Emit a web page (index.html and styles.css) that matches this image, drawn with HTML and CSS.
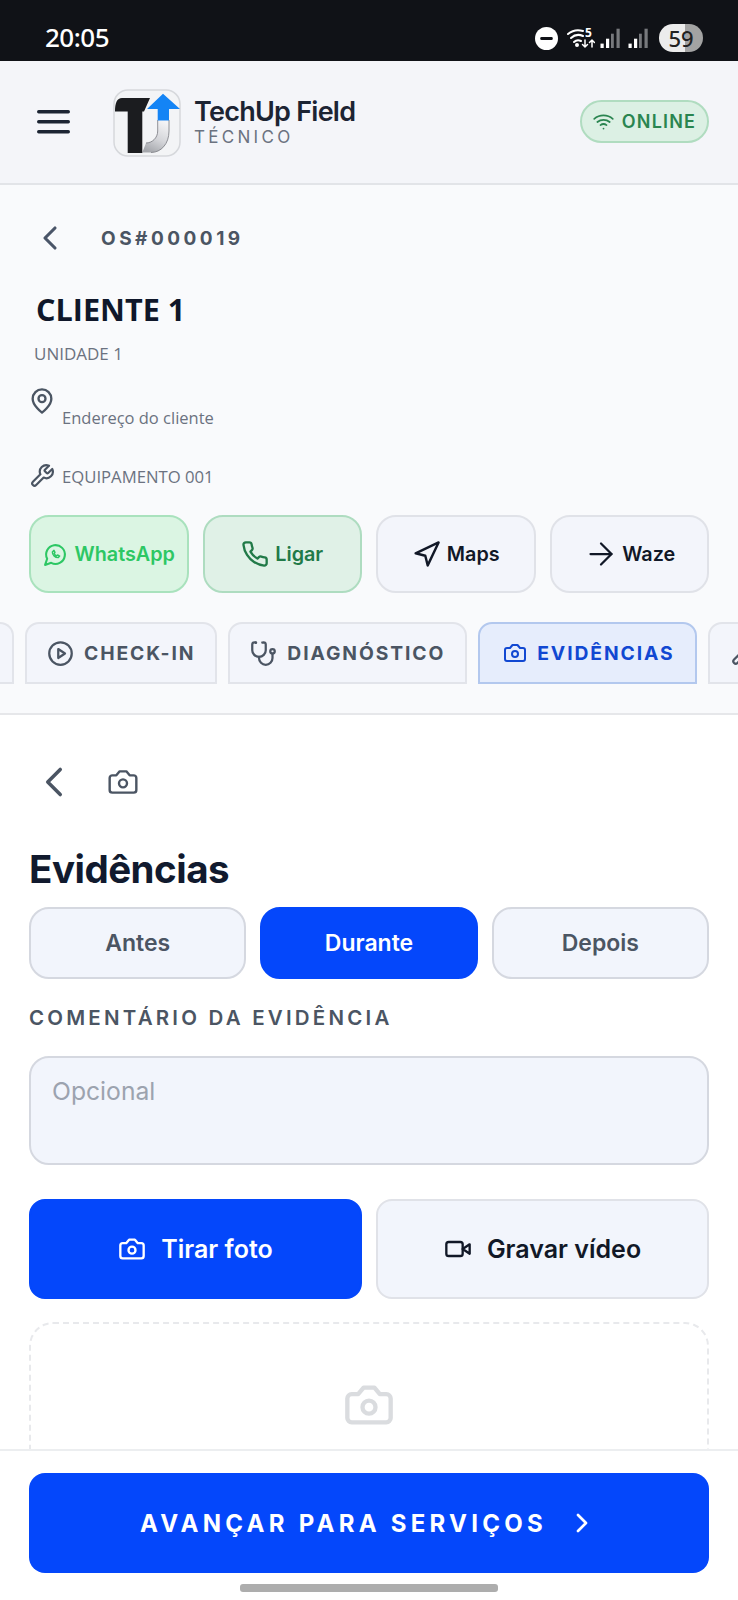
FILE: index.html
```html
<!DOCTYPE html>
<html lang="pt-BR">
<head>
    <meta charset="UTF-8">
    <meta name="viewport" content="width=device-width, initial-scale=1.0">
    <title>TechUp Field</title>
    <link rel="stylesheet" href="styles.css">
</head>
<body>
    <svg class="defs" width="0" height="0">
        <symbol id="i-camera" viewBox="0 0 24 24"><path d="M14.5 4h-5L7 7H4a2 2 0 0 0-2 2v9a2 2 0 0 0 2 2h16a2 2 0 0 0 2-2V9a2 2 0 0 0-2-2h-3l-2.5-3z"/><circle cx="12" cy="13" r="3"/></symbol>
        <symbol id="i-back" viewBox="0 0 24 24"><path d="m15 18-6-6 6-6"/></symbol>
        <symbol id="i-wrench" viewBox="0 0 24 24"><path d="M14.700 6.300a1 1 0 0 0 0 1.400l1.600 1.600a1 1 0 0 0 1.400 0l3.770-3.770a6 6 0 0 1-7.940 7.940l-6.910 6.910a2.120 2.120 0 0 1-3-3l6.910-6.910a6 6 0 0 1 7.940-7.940l-3.760 3.760z"/></symbol>
        <symbol id="i-signal" viewBox="0 0 20 20"><rect x="0.500" y="15.600" width="3.200" height="4.400" fill="#fff"/><rect x="6" y="10.700" width="3.200" height="9.300" fill="#fff"/><rect x="11" y="5.700" width="2.800" height="14.300" fill="#77797d"/><rect x="16.500" y="0.700" width="3.200" height="19.300" fill="#77797d"/></symbol>
    </svg>

    <div class="statusbar">
        <span class="clock">20:05</span>
        <div class="status-icons">
            <svg class="st-dnd" viewBox="0 0 22 22"><circle cx="11" cy="11" r="11" fill="#fff"/><rect x="5" y="9.500" width="12" height="3" rx="1.200" fill="#101217"/></svg>
            <svg class="st-wifi" viewBox="0 0 28 22" fill="none" stroke="#fff" stroke-width="2" stroke-linecap="round">
                <path d="M1 7a16 16 0 0 1 15-3"/>
                <path d="M4 11a11 11 0 0 1 12-2"/>
                <path d="M7 15a6 6 0 0 1 7-1"/>
                <circle cx="10" cy="18" r="1" fill="#fff"/>
                <path d="M18 13v7m-2.500-2.500 2.500 2.500 2.500-2.500" stroke-width="1.500"/>
                <path d="M25 20v-7m-2.500 2.500 2.500-2.500 2.500 2.500" stroke-width="1.500"/>
            </svg>
            <span class="st-five">5</span>
            <svg class="st-signal"><use href="#i-signal"/></svg>
            <svg class="st-signal"><use href="#i-signal"/></svg>
            <span class="battery">59</span>
        </div>
    </div>

    <header class="topbar">
        <svg class="menu-icon" viewBox="0 0 33 24"><rect y="0" width="33" height="3.500" rx="1.700"/><rect y="10" width="33" height="3.500" rx="1.700"/><rect y="20" width="33" height="3.500" rx="1.700"/></svg>
        <svg class="logo" viewBox="0 0 68 68">
            <defs>
                <linearGradient id="logo-grey" x1="0.700" y1="0" x2="0.300" y2="1"><stop offset="0" stop-color="#f4f4f6"/><stop offset="0.550" stop-color="#d4d5d9"/><stop offset="1" stop-color="#a4a6ab"/></linearGradient>
            </defs>
            <rect x="1" y="1" width="66" height="66" rx="14" fill="#f3f4f6" stroke="#d6d8dc" stroke-width="1.500"/>
            <path d="M44.700 31H56v11c0 13-8 21.500-18 21.500h-8.700L33 54c6 0 11.700-5 11.700-12z" fill="url(#logo-grey)"/>
            <path d="M56 31v11c0 13-8 21.500-18 21.500M44.700 31v11c0 7-5.700 12-11.700 12" fill="none" stroke="#77797f" stroke-width="0.800"/>
            <path d="M9 9h28l-6 13.500h-1.700V64H14.700V22.500H2C2 14 4 9 9 9z" fill="#1b1c1f"/>
            <path d="M50 4.700 67 20H56v11.400H44.700V20H34z" fill="#1484f5"/>
        </svg>
        <div class="brand">
            <div class="brand-name">TechUp Field</div>
            <div class="brand-role">TÉCNICO</div>
        </div>
        <div class="online">
            <svg class="icon" viewBox="0 0 24 24"><path d="M5 12.550a11 11 0 0 1 14.080 0"/><path d="M1.420 9a16 16 0 0 1 21.160 0"/><path d="M8.530 16.110a6 6 0 0 1 6.950 0"/><path d="M12 20h.010"/></svg>
            ONLINE
        </div>
    </header>

    <section class="order">
        <div class="order-top">
            <svg class="icon back-small"><use href="#i-back"/></svg>
            <span class="order-id">OS#000019</span>
        </div>
        <h1 class="client">CLIENTE 1</h1>
        <div class="unit">UNIDADE 1</div>
        <div class="address">
            <svg class="icon" viewBox="0 0 24 24"><path d="M20 10c0 6-8 12-8 12s-8-6-8-12a8 8 0 0 1 16 0Z"/><circle cx="12" cy="10" r="3"/></svg>
            <span>Endereço do cliente</span>
        </div>
        <div class="equipment">
            <svg class="icon"><use href="#i-wrench"/></svg>
            <span>EQUIPAMENTO 001</span>
        </div>
        <div class="contacts">
            <button class="contact contact-whats">
                <svg class="icon" viewBox="0 0 24 24"><path d="M7.900 20A9 9 0 1 0 4 16.100L2 22Z"/><path d="M9 9.500c0 3 2.500 5.500 5.500 5.500l1.500-1.500-2-1-1 .7c-1-.4-1.800-1.200-2.200-2.200l.7-1-1-2z" stroke-width="1.400"/></svg>
                WhatsApp
            </button>
            <button class="contact contact-call">
                <svg class="icon" viewBox="0 0 24 24"><path d="M22 16.920v3a2 2 0 0 1-2.180 2 19.790 19.790 0 0 1-8.630-3.070 19.500 19.500 0 0 1-6-6 19.790 19.790 0 0 1-3.070-8.670A2 2 0 0 1 4.110 2h3a2 2 0 0 1 2 1.720 12.840 12.840 0 0 0 .7 2.810 2 2 0 0 1-.45 2.110L8.090 9.910a16 16 0 0 0 6 6l1.270-1.270a2 2 0 0 1 2.110-.45 12.840 12.840 0 0 0 2.810.7A2 2 0 0 1 22 16.920z"/></svg>
                Ligar
            </button>
            <button class="contact contact-maps">
                <svg class="icon" viewBox="0 0 24 24"><polygon points="3 11 22 2 13 21 11 13 3 11"/></svg>
                Maps
            </button>
            <button class="contact contact-waze">
                <svg class="icon" viewBox="0 0 24 24"><path d="M5 12h14"/><path d="m12 5 7 7-7 7"/></svg>
                Waze
            </button>
        </div>
        <nav class="tabs">
            <div class="tab tab-cut"></div>
            <div class="tab">
                <svg class="icon" viewBox="0 0 24 24"><circle cx="12" cy="12" r="10"/><polygon points="10 8 16 12 10 16 10 8"/></svg>
                CHECK-IN
            </div>
            <div class="tab">
                <svg class="icon" viewBox="0 0 24 24"><path d="M4.800 2.300A.3.3 0 1 0 5 2H4a2 2 0 0 0-2 2v5a6 6 0 0 0 6 6 6 6 0 0 0 6-6V4a2 2 0 0 0-2-2h-1a.2.2 0 1 0 .3.3"/><path d="M8 15v1a6 6 0 0 0 6 6 6 6 0 0 0 6-6v-4"/><circle cx="20" cy="10" r="2"/></svg>
                DIAGNÓSTICO
            </div>
            <div class="tab tab-active">
                <svg class="icon"><use href="#i-camera"/></svg>
                EVIDÊNCIAS
            </div>
            <div class="tab">
                <svg class="icon"><use href="#i-wrench"/></svg>
            </div>
        </nav>
    </section>

    <main class="content">
        <div class="content-top">
            <svg class="icon back-big"><use href="#i-back"/></svg>
            <svg class="icon camera-small"><use href="#i-camera"/></svg>
        </div>
        <h2 class="title">Evidências</h2>
        <div class="segments">
            <button class="segment">Antes</button>
            <button class="segment segment-active">Durante</button>
            <button class="segment">Depois</button>
        </div>
        <div class="field-label">COMENTÁRIO DA EVIDÊNCIA</div>
        <div class="textarea">Opcional</div>
        <div class="capture">
            <button class="capture-btn capture-primary">
                <svg class="icon"><use href="#i-camera"/></svg>
                Tirar foto
            </button>
            <button class="capture-btn">
                <svg class="icon" viewBox="0 0 24 24"><path d="m22 8-6 4 6 4V8Z"/><rect x="2" y="6" width="14" height="12" rx="2"/></svg>
                Gravar vídeo
            </button>
        </div>
        <div class="empty">
            <svg class="icon"><use href="#i-camera"/></svg>
        </div>
    </main>

    <footer class="footer">
        <button class="next-btn">
            AVANÇAR PARA SERVIÇOS
            <svg class="icon" viewBox="0 0 24 24"><path d="m9 18 6-6-6-6"/></svg>
        </button>
        <div class="home-bar"></div>
    </footer>
</body>
</html>
```

FILE: styles.css
```css
* {
    box-sizing: border-box;
}
html, body {
    margin: 0;
    height: 1600px;
    overflow: hidden;
}
body {
    font-family: Inter, "Liberation Sans", sans-serif;
    background: #fff;
    display: flex;
    flex-direction: column;
    color: #111827;
}
button {
    font-family: inherit;
    cursor: pointer;
}
.defs {
    position: absolute;
}
.icon {
    fill: none;
    stroke: currentColor;
    stroke-width: 2;
    stroke-linecap: round;
    stroke-linejoin: round;
    flex: none;
}

/* status bar */
.statusbar {
    height: 61px;
    flex: none;
    background: #101217;
    display: flex;
    align-items: flex-start;
    justify-content: space-between;
    padding: 21px 35px 0 45px;
    color: #fff;
}
.clock {
    font-family: "Noto Sans", sans-serif;
    font-size: 26px;
    font-weight: 500;
    line-height: 32px;
    letter-spacing: -0.5px;
}
.status-icons {
    display: flex;
    align-items: center;
    height: 28px;
    margin-top: 3px;
    position: relative;
}
.st-dnd {
    width: 23px;
    height: 23px;
}
.st-wifi {
    width: 28px;
    height: 22px;
    margin: 0 5px 0 9px;
}
.st-five {
    position: absolute;
    left: 50px;
    top: 4px;
    font-family: "Noto Sans", sans-serif;
    font-size: 12px;
    font-weight: 700;
    line-height: 10px;
}
.st-signal {
    width: 20px;
    height: 20px;
    margin-right: 8px;
}
.battery {
    width: 44px;
    height: 28px;
    border-radius: 14px;
    margin-left: 3px;
    background: linear-gradient(90deg, #ececec 0 58%, #a3a3a3 58%);
    color: #222;
    font-family: "Noto Sans", sans-serif;
    font-size: 22px;
    font-weight: 500;
    line-height: 28px;
    text-align: center;
}

/* app header */
.topbar {
    height: 124px;
    flex: none;
    background: #f4f5f9;
    border-bottom: 2px solid #e2e4e8;
    display: flex;
    align-items: center;
    padding: 0 29px 0 37px;
}
.menu-icon {
    width: 33px;
    height: 24px;
    fill: #1c2433;
}
.logo {
    width: 68px;
    height: 68px;
    margin-left: 43px;
    margin-top: 2px;
}
.brand {
    margin-left: 13px;
    flex: 1;
    margin-top: -2px;
}
.brand-name {
    font-size: 27px;
    font-weight: 600;
    line-height: 32px;
    letter-spacing: -0.75px;
    color: #1c2433;
}
.brand-role {
    font-size: 17px;
    line-height: 19px;
    letter-spacing: 3.3px;
    color: #6b7280;
}
.online {
    width: 129px;
    height: 43px;
    border: 2px solid #b0dcc0;
    border-radius: 22px;
    background: #dcf0e4;
    color: #2a8550;
    font-size: 18px;
    font-weight: 600;
    letter-spacing: 1.2px;
    display: flex;
    align-items: center;
    justify-content: center;
    gap: 8px;
    margin-top: -1px;
}
.online .icon {
    width: 21px;
    height: 21px;
}

/* order summary */
.order {
    height: 530px;
    flex: none;
    background: #f9fafc;
    border-bottom: 2px solid #e6e7ea;
    padding: 0 29px;
}
.order-top {
    display: flex;
    align-items: center;
    height: 30px;
    margin-top: 38px;
}
.back-small {
    width: 40px;
    height: 40px;
    flex: none;
    color: #4a5568;
    margin-left: 1px;
    stroke-width: 1.900;
}
.order-id {
    font-size: 19px;
    font-weight: 700;
    letter-spacing: 3.5px;
    color: #4b5563;
    margin-left: 31px;
}
.client {
    font-family: "Open Sans", sans-serif;
    font-size: 30.6px;
    font-weight: 700;
    line-height: 40px;
    color: #0f172a;
    margin: 36px 0 0 7px;
}
.unit {
    font-family: "Open Sans", sans-serif;
    font-size: 17px;
    line-height: 22px;
    color: #6b7280;
    margin: 14px 0 0 5px;
}
.address {
    display: flex;
    align-items: flex-start;
    font-family: "Open Sans", sans-serif;
    font-size: 16.5px;
    color: #6b7280;
    margin-top: 22px;
    height: 50px;
}
.address .icon {
    width: 28px;
    height: 28px;
    color: #4b5563;
    margin-left: -1.5px;
}
.address span {
    margin: 19px 0 0 6.5px;
}
.equipment {
    display: flex;
    align-items: center;
    font-family: "Open Sans", sans-serif;
    font-size: 16.7px;
    color: #6b7280;
    margin-top: 26px;
    height: 26px;
}
.equipment .icon {
    width: 26px;
    height: 26px;
    color: #4b5563;
}
.equipment span {
    margin-left: 7px;
}
.contacts {
    display: grid;
    grid-template-columns: repeat(4, 1fr);
    gap: 14px;
    margin-top: 26px;
}
.contact {
    height: 78px;
    border: 2px solid #e0e2e8;
    border-radius: 20px;
    background: #f3f5fb;
    color: #111827;
    font-size: 19.8px;
    font-weight: 600;
    display: flex;
    align-items: center;
    justify-content: center;
    gap: 7px;
    padding: 0;
}
.contact .icon {
    width: 25px;
    height: 25px;
}
.contact-whats {
    background: #dbf5e3;
    border-color: #a9e2bd;
    color: #2dc764;
}
.contact-call {
    background: #e0f1e7;
    border-color: #aedcc0;
    color: #217a48;
}
.contact-call .icon {
    width: 28px;
    height: 28px;
    margin-right: -1px;
}
.contact-maps .icon {
    width: 29px;
    height: 29px;
    margin-right: -1px;
}
.contact-waze .icon {
    width: 36px;
    height: 36px;
    margin-right: -4px;
    stroke-width: 1.500;
}
.tabs {
    display: flex;
    gap: 11px;
    overflow: hidden;
    margin: 29px -29px 0;
}
.tab {
    height: 62px;
    flex: none;
    border: 2px solid #e2e4ea;
    border-radius: 14px 14px 0 0;
    background: #f3f5fb;
    color: #4b5563;
    font-size: 19.3px;
    font-weight: 700;
    letter-spacing: 1.9px;
    display: flex;
    align-items: center;
    gap: 10px;
    padding: 0 20px;
}
.tab .icon {
    width: 27px;
    height: 27px;
}
.tab-cut {
    width: 14px;
    padding: 0;
    border-left: 0;
    border-top-left-radius: 0;
}
.tab-active {
    background: #e6edfc;
    border-color: #b3c8ee;
    color: #1148d2;
}
.tab-active .icon {
    width: 24px;
    height: 24px;
    margin-left: 3px;
}

/* main content */
.content {
    flex: 1;
    min-height: 0;
    overflow: hidden;
    padding: 0 29px;
}
.content-top {
    display: flex;
    align-items: center;
    height: 30px;
    margin-top: 52px;
}
.back-big {
    width: 50px;
    height: 50px;
    color: #4b5563;
    stroke-width: 1.700;
}
.camera-small {
    width: 32px;
    height: 32px;
    color: #4b5563;
    margin-left: 27.5px;
    stroke-width: 1.800;
}
.title {
    font-size: 38.5px;
    font-weight: 700;
    line-height: 48px;
    letter-spacing: -0.5px;
    color: #111a2e;
    margin: 48px 0 0;
}
.segments {
    display: grid;
    grid-template-columns: repeat(3, 1fr);
    gap: 14px;
    margin-top: 14px;
}
.segment {
    height: 72px;
    border: 2px solid #d5d8e0;
    border-radius: 20px;
    background: #f2f5fc;
    color: #4b5563;
    font-size: 23px;
    font-weight: 600;
    padding: 0;
}
.segment-active {
    background: #0447fb;
    border-color: #0447fb;
    color: #fff;
}
.field-label {
    font-size: 20.5px;
    font-weight: 600;
    line-height: 24px;
    letter-spacing: 3.2px;
    color: #4b5563;
    margin-top: 27px;
}
.textarea {
    height: 109px;
    border: 2px solid #d5d8e0;
    border-radius: 20px;
    background: #f2f5fc;
    color: #9ca3af;
    font-size: 24.7px;
    line-height: 30px;
    padding: 18px 21px;
    margin-top: 26px;
}
.capture {
    display: grid;
    grid-template-columns: 1fr 1fr;
    gap: 14px;
    margin-top: 34px;
}
.capture-btn {
    height: 100px;
    border: 2px solid #e0e2e8;
    border-radius: 16px;
    background: #f2f5fc;
    color: #111827;
    font-size: 25px;
    font-weight: 600;
    display: flex;
    align-items: center;
    justify-content: center;
    gap: 15px;
    padding: 0;
}
.capture-btn .icon {
    width: 28px;
    height: 28px;
}
.capture-primary {
    background: #0447fb;
    border-color: #0447fb;
    color: #fff;
}
.empty {
    height: 200px;
    border: 2px dashed #e8e9ec;
    border-radius: 24px;
    margin-top: 23px;
    display: flex;
    justify-content: center;
    padding-top: 55px;
}
.empty .icon {
    width: 52px;
    height: 52px;
    color: #dadcdf;
}

/* bottom action */
.footer {
    height: 151px;
    flex: none;
    background: #fff;
    border-top: 2px solid #eceef0;
    padding: 22px 29px 0;
}
.next-btn {
    width: 100%;
    height: 100px;
    border: 0;
    border-radius: 16px;
    background: #0447fb;
    color: #fff;
    font-size: 24px;
    font-weight: 700;
    letter-spacing: 4.25px;
    display: flex;
    align-items: center;
    justify-content: center;
    gap: 19px;
    padding: 0;
}
.next-btn .icon {
    width: 32px;
    height: 32px;
}
.home-bar {
    width: 258px;
    height: 8px;
    border-radius: 3px;
    background: #adadad;
    margin: 11px auto 0;
}
```
